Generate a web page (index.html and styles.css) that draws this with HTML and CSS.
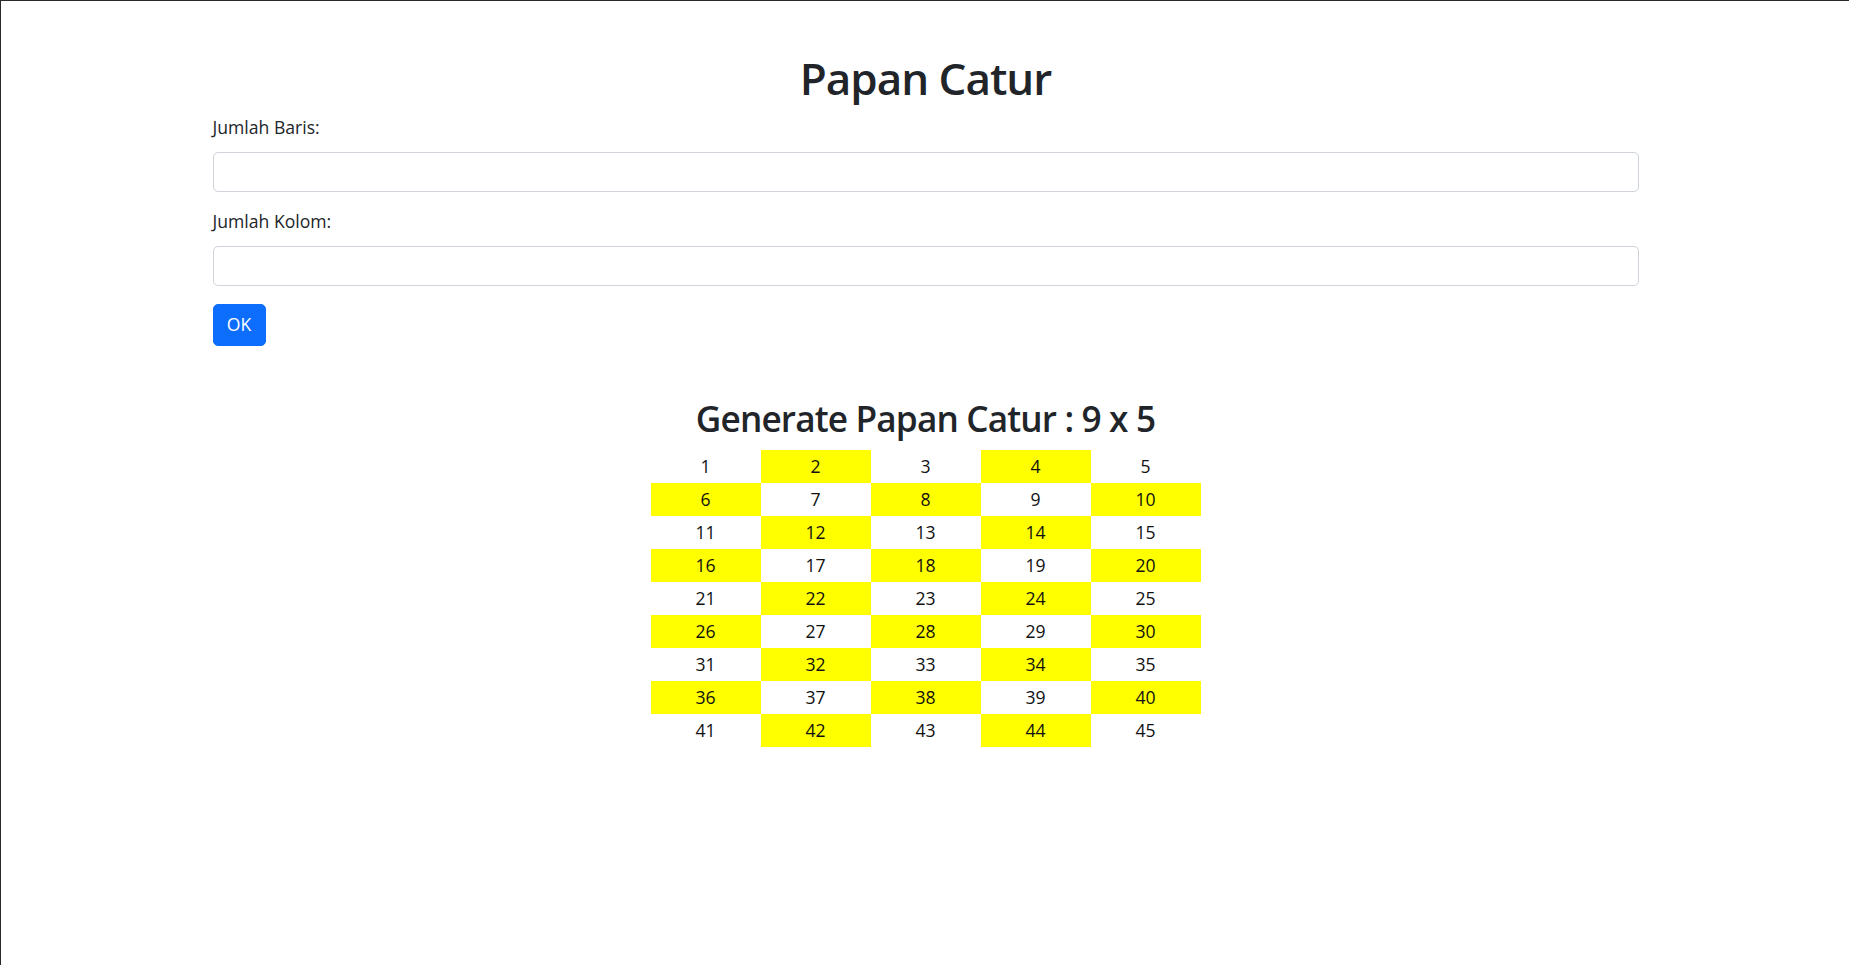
FILE: index.html
```html
<!DOCTYPE html>
<html lang="id">
<head>
<meta charset="utf-8">
<title>Papan Catur</title>
<link rel="stylesheet" href="styles.css">
</head>
<body>
<div class="frame">
  <div class="container">
    <h1 class="title">Papan Catur</h1>
    <form class="form">
      <div class="field">
        <label class="label" for="baris">Jumlah Baris:</label>
        <input class="input" id="baris" type="text">
      </div>
      <div class="field">
        <label class="label" for="kolom">Jumlah Kolom:</label>
        <input class="input" id="kolom" type="text">
      </div>
      <button class="btn" type="button">OK</button>
    </form>
    <section class="result">
      <h2 class="subtitle">Generate Papan Catur : 9 x 5</h2>
      <table class="board">
        <tbody>
          <tr><td>1</td><td class="y">2</td><td>3</td><td class="y">4</td><td>5</td></tr>
          <tr><td class="y">6</td><td>7</td><td class="y">8</td><td>9</td><td class="y">10</td></tr>
          <tr><td>11</td><td class="y">12</td><td>13</td><td class="y">14</td><td>15</td></tr>
          <tr><td class="y">16</td><td>17</td><td class="y">18</td><td>19</td><td class="y">20</td></tr>
          <tr><td>21</td><td class="y">22</td><td>23</td><td class="y">24</td><td>25</td></tr>
          <tr><td class="y">26</td><td>27</td><td class="y">28</td><td>29</td><td class="y">30</td></tr>
          <tr><td>31</td><td class="y">32</td><td>33</td><td class="y">34</td><td>35</td></tr>
          <tr><td class="y">36</td><td>37</td><td class="y">38</td><td>39</td><td class="y">40</td></tr>
          <tr><td>41</td><td class="y">42</td><td>43</td><td class="y">44</td><td>45</td></tr>
        </tbody>
      </table>
    </section>
  </div>
</div>
</body>
</html>
```

FILE: styles.css
```css
html, body {
  margin: 0;
  padding: 0;
  height: 100%;
  background: #fff;
}
body {
  font-family: "Open Sans", "Noto Sans", sans-serif;
  color: #212529;
  font-size: 17.6px;
  line-height: 1.5;
}
.frame {
  box-sizing: border-box;
  min-height: 100%;
  border-top: 1px solid #2a2a2a;
  border-left: 1px solid #2a2a2a;
  padding-top: 51px;
}
.container {
  width: 1426px;
  margin: 0 auto;
  padding-left: 1px;
}
.title {
  margin: 0;
  font-size: 44px;
  line-height: 53px;
  font-weight: 600;
  letter-spacing: -1px;
  text-align: center;
}
.form {
  display: flex;
  flex-direction: column;
  align-items: flex-start;
  margin-top: 9px;
}
.field {
  width: 100%;
  display: flex;
  flex-direction: column;
  margin-bottom: 16px;
}
.label {
  line-height: 26px;
  margin-bottom: 12px;
}
.input {
  box-sizing: border-box;
  width: 100%;
  height: 40px;
  border: 1px solid #ced4da;
  border-radius: 5px;
  background: #fff;
  font: inherit;
  padding: 6px 13px;
  margin: 0;
}
.btn {
  box-sizing: border-box;
  margin-top: 2px;
  height: 42px;
  width: 53px;
  padding: 0;
  border: 1px solid #0d6efd;
  border-radius: 5px;
  background: #0d6efd;
  color: #fff;
  font: inherit;
  line-height: 1;
}
.result {
  display: flex;
  flex-direction: column;
  align-items: center;
  margin-top: 51px;
}
.subtitle {
  margin: 0 0 11px;
  font-size: 35.2px;
  line-height: 42px;
  font-weight: 600;
  letter-spacing: -0.85px;
}
.board {
  border-collapse: collapse;
  color: #111;
}
.board td {
  width: 110px;
  height: 33px;
  padding: 0;
  text-align: center;
  vertical-align: middle;
  line-height: 1;
}
.board td.y {
  background: #ffff00;
}
```
